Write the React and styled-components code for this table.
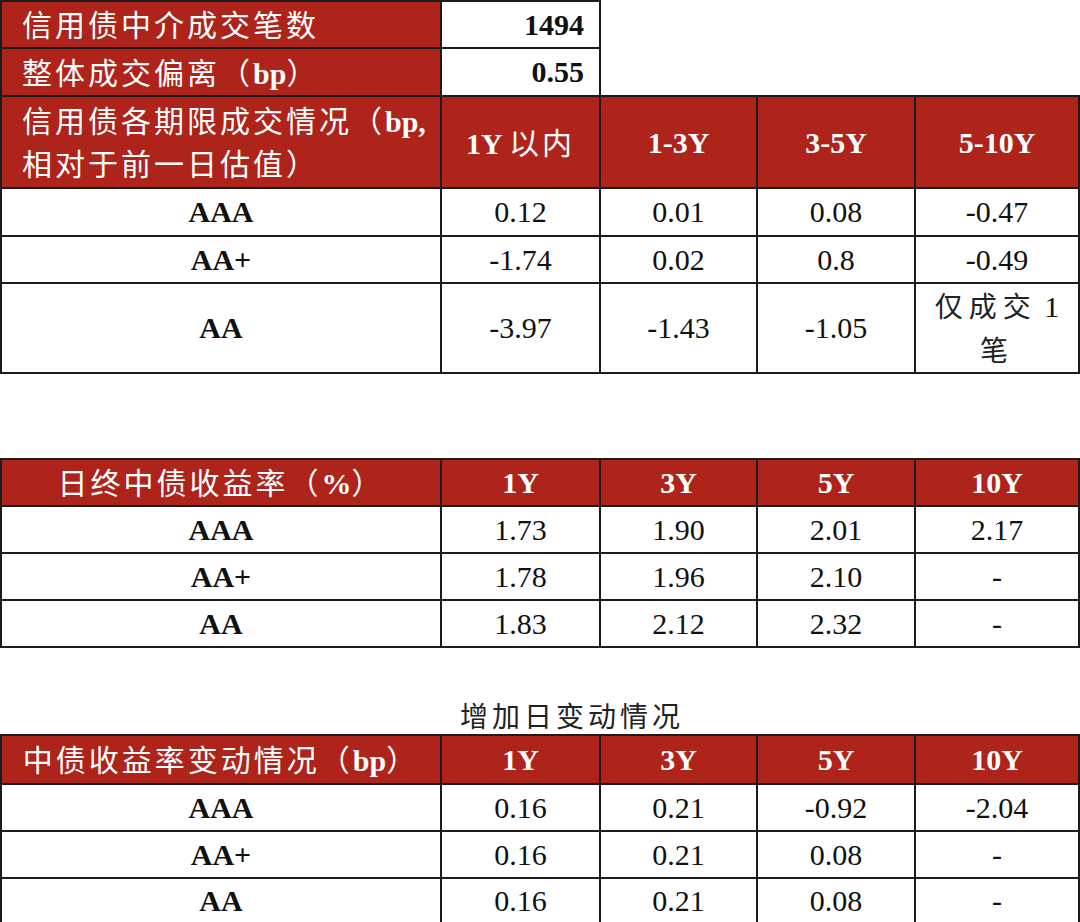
import React from "react";
import styled, { createGlobalStyle } from "styled-components";

const RED = "#ae231a";
const LINE = "#1c1c1c";
const SERIF = `"Liberation Serif", "Noto Sans CJK SC", serif`;

const GlobalStyle = createGlobalStyle`
  html, body {
    margin: 0;
    padding: 0;
    background: #fff;
  }
  body {
    font-family: ${SERIF};
    color: #111;
  }
`;

const Page = styled.div`
  width: 1080px;
  display: flex;
  flex-direction: column;
`;

const Table = styled.table`
  width: 1078px;
  border-collapse: collapse;
  table-layout: fixed;
  margin-top: ${(p) => p.$gap || 0}px;
  font-family: ${SERIF};
`;

const Row = styled.tr`
  height: ${(p) => p.$h}px;
`;

const HeadCell = styled.th`
  background: ${RED};
  color: #fff;
  border: 2px solid ${LINE};
  font-family: ${SERIF};
  font-size: 30px;
  font-weight: 700;
  line-height: 41px;
  text-align: ${(p) => p.$align || "center"};
  padding: ${(p) => (p.$align === "left" ? "0 0 0 20px" : "0")};
  vertical-align: middle;
  white-space: nowrap;
`;

const Cell = styled.td`
  background: #fff;
  color: #111;
  border: 2px solid ${LINE};
  font-family: ${SERIF};
  font-size: 30px;
  font-weight: ${(p) => (p.$bold ? 700 : 400)};
  line-height: 42px;
  text-align: ${(p) => p.$align || "center"};
  padding: ${(p) => (p.$align === "right" ? "0 15px 0 0" : "0")};
  vertical-align: middle;
`;

const Blank = styled.td`
  border: none;
  background: #fff;
`;

const Zh = styled.span`
  font-family: "Noto Sans CJK SC", sans-serif;
  font-weight: 400;
  letter-spacing: 3px;
`;

const Note = styled.span`
  font-family: "Noto Sans CJK SC", sans-serif;
  font-size: 28px;
  letter-spacing: 6px;
  color: #222;
`;

const Caption = styled.div`
  margin-top: 49px;
  padding-left: 460px;
  height: 37px;
  line-height: 37px;
  font-family: "Noto Sans CJK SC", sans-serif;
  font-size: 28px;
  letter-spacing: 4px;
  color: #222;
`;

const Cols = () => (
  <colgroup>
    <col style={{ width: 440 }} />
    <col style={{ width: 159 }} />
    <col style={{ width: 157 }} />
    <col style={{ width: 158 }} />
    <col style={{ width: 164 }} />
  </colgroup>
);

const trades = [
  ["AAA", "0.12", "0.01", "0.08", "-0.47", 48],
  ["AA+", "-1.74", "0.02", "0.8", "-0.49", 47],
];

const yields = [
  ["AAA", "1.73", "1.90", "2.01", "2.17"],
  ["AA+", "1.78", "1.96", "2.10", "-"],
  ["AA", "1.83", "2.12", "2.32", "-"],
];

const changes = [
  ["AAA", "0.16", "0.21", "-0.92", "-2.04", 47],
  ["AA+", "0.16", "0.21", "0.08", "-", 47],
  ["AA", "0.16", "0.21", "0.08", "-", 46],
];

function DataRow({ row, h }) {
  return (
    <Row $h={h}>
      <Cell $bold>{row[0]}</Cell>
      {row.slice(1, 5).map((v, i) => (
        <Cell key={i}>{v}</Cell>
      ))}
    </Row>
  );
}

function TenorHead({ labels }) {
  return labels.map((l) => <HeadCell key={l}>{l}</HeadCell>);
}

export default function App() {
  return (
    <Page>
      <GlobalStyle />
      <Table>
        <Cols />
        <tbody>
          <Row $h={47}>
            <HeadCell $align="left">
              <Zh>信用债中介成交笔数</Zh>
            </HeadCell>
            <Cell $bold $align="right">1494</Cell>
            <Blank />
            <Blank />
            <Blank />
          </Row>
          <Row $h={48}>
            <HeadCell $align="left">
              <Zh>整体成交偏离（</Zh>bp<Zh>）</Zh>
            </HeadCell>
            <Cell $bold $align="right">0.55</Cell>
            <Blank />
            <Blank />
            <Blank />
          </Row>
          <Row $h={92}>
            <HeadCell $align="left">
              <Zh>信用债各期限成交情况（</Zh>bp,
              <br />
              <Zh>相对于前一日估值）</Zh>
            </HeadCell>
            <HeadCell>
              1Y <Zh>以内</Zh>
            </HeadCell>
            <TenorHead labels={["1-3Y", "3-5Y", "5-10Y"]} />
          </Row>
          {trades.map((r) => (
            <DataRow key={r[0]} row={r} h={r[5]} />
          ))}
          <Row $h={90}>
            <Cell $bold>AA</Cell>
            <Cell>-3.97</Cell>
            <Cell>-1.43</Cell>
            <Cell>-1.05</Cell>
            <Cell>
              <Note>仅成交</Note> 1
              <br />
              <Note>笔</Note>
            </Cell>
          </Row>
        </tbody>
      </Table>

      <Table $gap={84}>
        <Cols />
        <tbody>
          <Row $h={47}>
            <HeadCell>
              <Zh>日终中债收益率（</Zh>%<Zh>）</Zh>
            </HeadCell>
            <TenorHead labels={["1Y", "3Y", "5Y", "10Y"]} />
          </Row>
          {yields.map((r) => (
            <DataRow key={r[0]} row={r} h={47} />
          ))}
        </tbody>
      </Table>

      <Caption>增加日变动情况</Caption>

      <Table>
        <Cols />
        <tbody>
          <Row $h={49}>
            <HeadCell>
              <Zh>中债收益率变动情况（</Zh>bp<Zh>）</Zh>
            </HeadCell>
            <TenorHead labels={["1Y", "3Y", "5Y", "10Y"]} />
          </Row>
          {changes.map((r) => (
            <DataRow key={r[0]} row={r} h={r[5]} />
          ))}
        </tbody>
      </Table>
    </Page>
  );
}
